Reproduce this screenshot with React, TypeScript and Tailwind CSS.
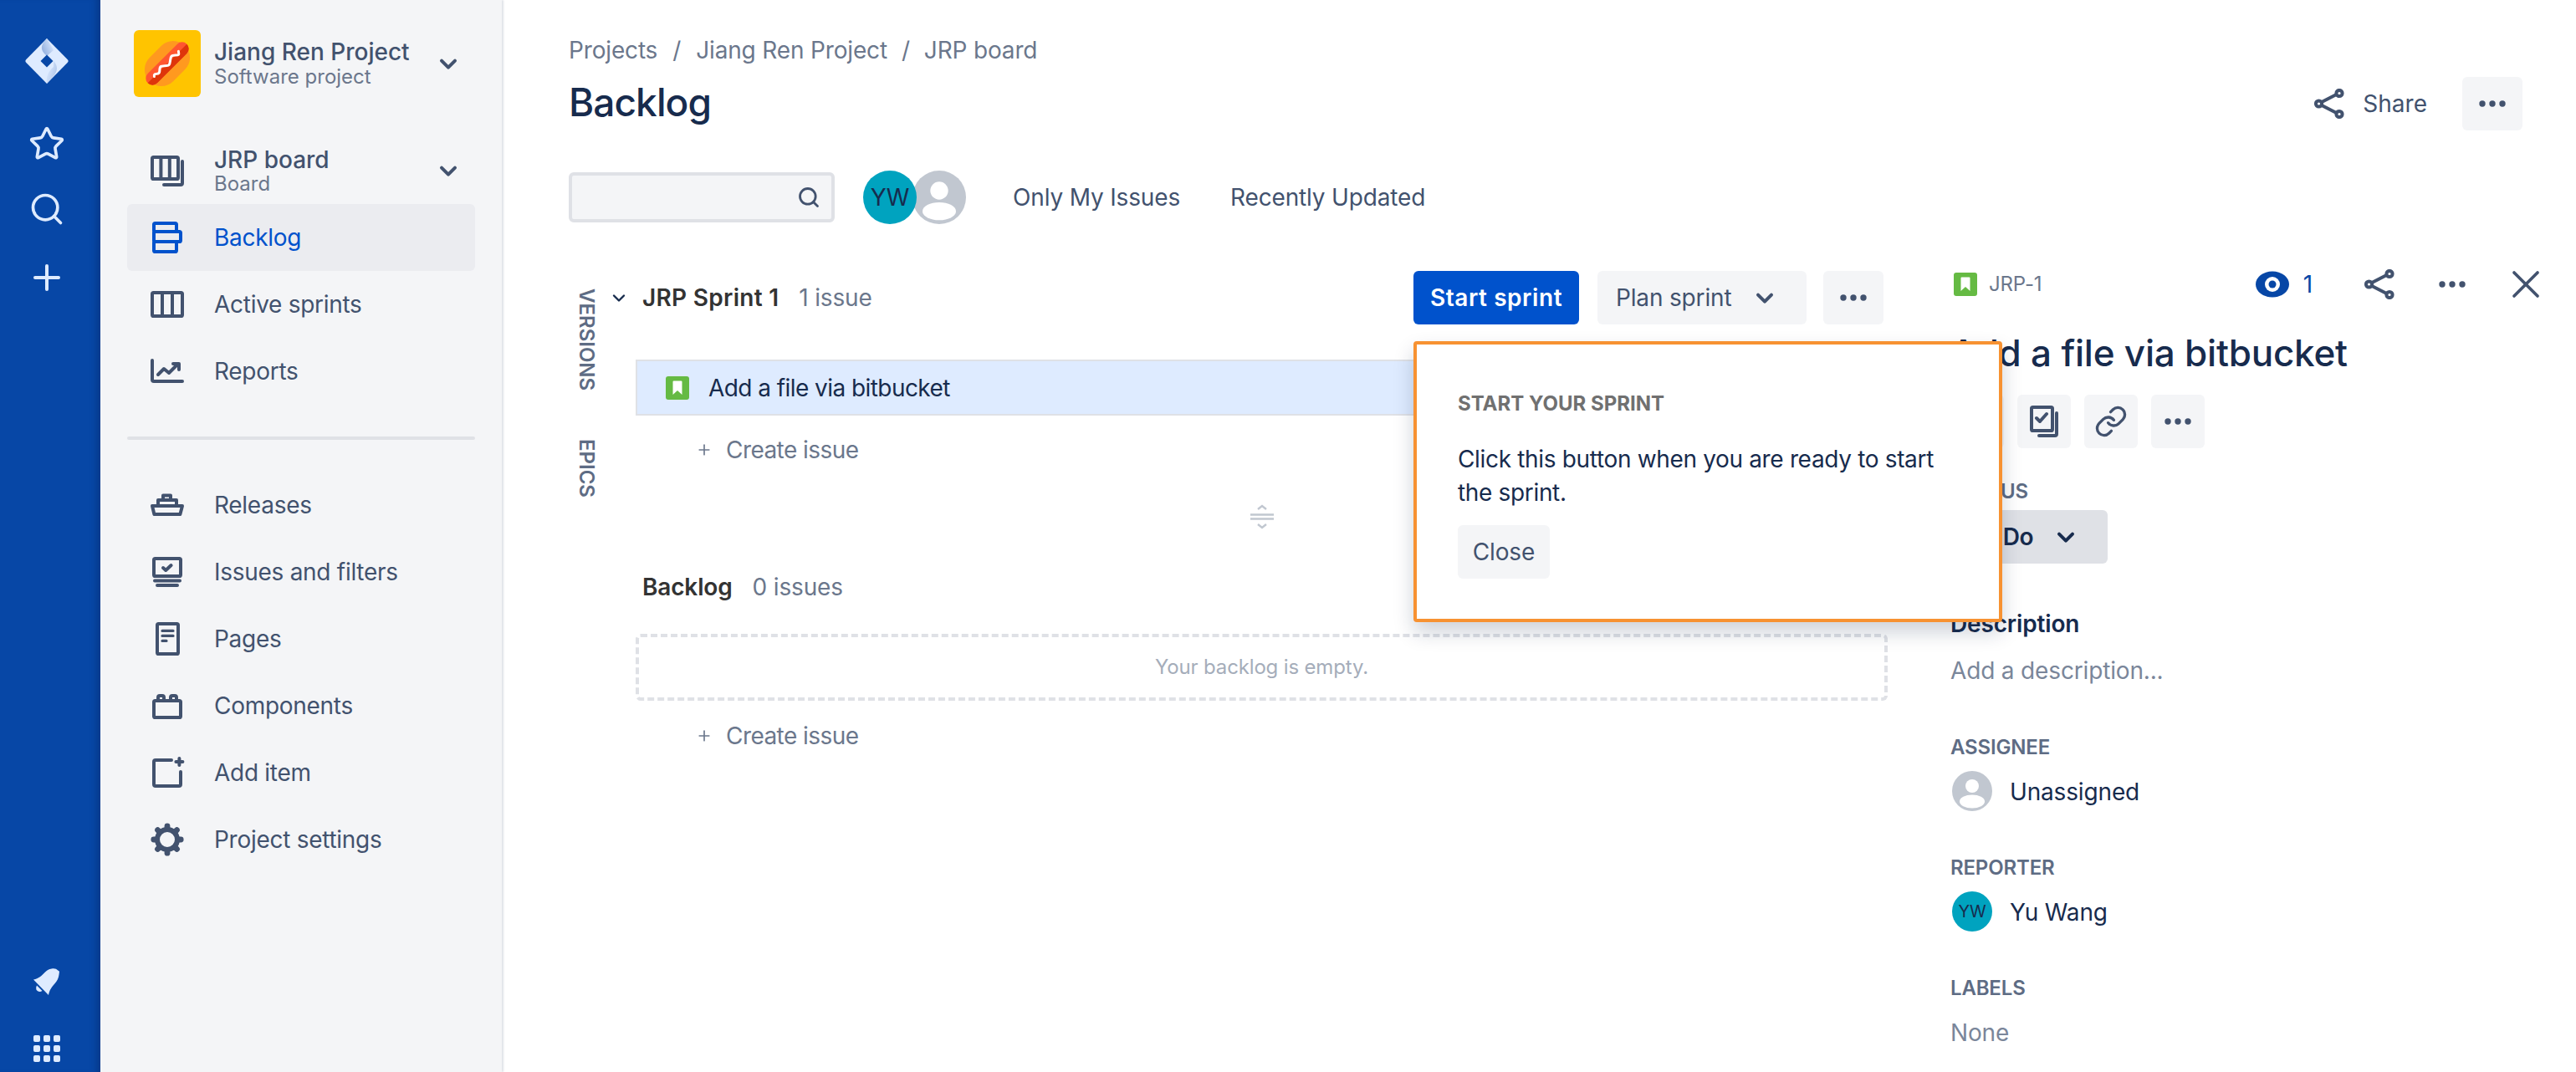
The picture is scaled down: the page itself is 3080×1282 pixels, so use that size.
import React from 'react';
import { Link, Plus, Search, Star, X } from 'lucide-react';

type IconProps = { className?: string };

function Svg({ className, children }: { className?: string; children: React.ReactNode }) {
  return (
    <svg viewBox="0 0 24 24" fill="none" stroke="currentColor" strokeWidth={2} strokeLinecap="round" strokeLinejoin="round" className={className}>
      {children}
    </svg>
  );
}

const BoardIcon = ({ className }: IconProps) => (
  <Svg className={className}>
    <rect x="3" y="4" width="15.5" height="13" rx="0.8" />
    <path d="M8.2 4v13M13.4 4v13M21 6.5v13a1 1 0 0 1-1 1H10" />
  </Svg>
);
const BacklogIcon = ({ className }: IconProps) => (
  <Svg className={className}>
    <rect x="4" y="3.5" width="13.5" height="5" rx="0.8" />
    <rect x="4" y="8.5" width="16" height="6" rx="0.8" />
    <rect x="4" y="14.5" width="13.5" height="6" rx="0.8" />
  </Svg>
);
const SprintsIcon = ({ className }: IconProps) => (
  <Svg className={className}>
    <rect x="3" y="5" width="18" height="14" rx="0.8" />
    <path d="M9 5v14M15 5v14" />
  </Svg>
);
const ReportsIcon = ({ className }: IconProps) => (
  <Svg className={className}>
    <path d="M3 5.500V17a1 1 0 0 0 1 1h17" />
    <path d="M6.500 14l3.500-3.500 3 2.500 5.500-5.500M15.500 7.500h3.500V11" />
  </Svg>
);
const ShipIcon = ({ className }: IconProps) => (
  <Svg className={className}>
    <path d="M3 12.500h18l-1.300 5H4.200z" />
    <path d="M6.500 12.500V9h11v3.500M9.500 9V6.300h4.500V9" />
  </Svg>
);
const IssuesIcon = ({ className }: IconProps) => (
  <Svg className={className}>
    <rect x="4" y="4" width="16" height="10.500" rx="0.8" />
    <path d="M9.500 9.500l1.600 1.500 3.200-3M4.500 17.200h15M6 20h12" />
  </Svg>
);
const PagesIcon = ({ className }: IconProps) => (
  <Svg className={className}>
    <rect x="6" y="3" width="12.500" height="18" rx="0.8" />
    <path d="M9 7.200h6.500M9 10.200h6.500M9 13.200h2.500" strokeWidth={1.6} />
  </Svg>
);
const ComponentsIcon = ({ className }: IconProps) => (
  <Svg className={className}>
    <rect x="4" y="9" width="16" height="10" rx="0.8" />
    <path d="M6.500 9V7a1 1 0 0 1 1-1h1.500a1 1 0 0 1 1 1v2M14 9V7a1 1 0 0 1 1-1h1.500a1 1 0 0 1 1 1v2" />
  </Svg>
);
const AddItemIcon = ({ className }: IconProps) => (
  <Svg className={className}>
    <path d="M14.500 4.500H5a1 1 0 0 0-1 1V19a1 1 0 0 0 1 1h14a1 1 0 0 0 1-1v-7.500" />
    <path d="M19.200 3.500v4M17.200 5.500h4" />
  </Svg>
);
const GearIcon = ({ className }: IconProps) => (
  <Svg className={className}>
    <circle cx="12" cy="12" r="6" strokeWidth={3} />
    {[0, 45, 90, 135, 180, 225, 270, 315].map((a) => (
      <path key={a} d="M12 3.900v1.400" strokeWidth={3.4} transform={`rotate(${a} 12 12)`} />
    ))}
  </Svg>
);

function Chevron({ className, width = 3 }: { className?: string; width?: number }) {
  return (
    <svg viewBox="0 0 24 24" fill="none" stroke="currentColor" strokeWidth={width} strokeLinecap="round" strokeLinejoin="round" className={className}>
      <path d="M6 9.500l6 6 6-6" />
    </svg>
  );
}

function Dots({ className }: IconProps) {
  return (
    <svg viewBox="0 0 32 8" fill="currentColor" className={className}>
      <circle cx="4" cy="4" r="3.700" />
      <circle cx="16" cy="4" r="3.700" />
      <circle cx="28" cy="4" r="3.700" />
    </svg>
  );
}

function ShareIcon({ className }: IconProps) {
  return (
    <svg viewBox="0 0 36 36" fill="none" stroke="currentColor" strokeWidth={4} className={className}>
      <circle cx="5.500" cy="18" r="3.600" />
      <circle cx="30" cy="5.500" r="3.600" />
      <circle cx="30" cy="30.500" r="3.600" />
      <path d="M9 16l17.500-9M9 20l17.500 9" />
    </svg>
  );
}

function StoryIcon({ className }: IconProps) {
  return (
    <svg viewBox="0 0 28 28" className={`w-7 h-7 shrink-0 ${className ?? ''}`}>
      <rect width="28" height="28" rx="3" fill="#65BA43" />
      <path d="M8.500 6.500a1 1 0 0 1 1-1h9a1 1 0 0 1 1 1V22L14 17l-5.500 5z" fill="#fff" />
    </svg>
  );
}

function DefaultAvatar({ className }: IconProps) {
  return (
    <svg viewBox="0 0 48 48" className={className}>
      <circle cx="24" cy="24" r="24" fill="#C1C7D0" />
      <circle cx="24" cy="18" r="8" fill="#fff" />
      <ellipse cx="24" cy="36.500" rx="15" ry="8" fill="#fff" />
    </svg>
  );
}

function JiraLogo() {
  return (
    <svg viewBox="0 0 52 54" className="w-[52px] h-[54px]">
      <defs>
        <linearGradient id="logoA" x1="1" y1="0.2" x2="0.2" y2="0.7">
          <stop offset="0" stopColor="#DEEBFF" />
          <stop offset="1" stopColor="#9DB8E3" />
        </linearGradient>
        <linearGradient id="logoB" x1="0" y1="0.3" x2="0.8" y2="0.8">
          <stop offset="0" stopColor="#DEEBFF" />
          <stop offset="1" stopColor="#9DB8E3" />
        </linearGradient>
      </defs>
      <path d="M26 0l24.600 24.900a3 3 0 0 1 0 4.200L26 54 1.400 29.100a3 3 0 0 1 0-4.200z" fill="#DEEBFF" />
      <path d="M26 0c-8 8-8 14-1 20l1 1 8-7z" fill="url(#logoA)" />
      <path d="M34 27c5 5 6 12-1 19l-7 8c-1-8 1-14 8-20z" fill="url(#logoB)" opacity="0.7" />
      <path d="M26 19.500l7.500 7.500-7.500 7.500-7.500-7.500z" fill="#0747A6" />
    </svg>
  );
}

function BellIcon() {
  return (
    <svg viewBox="0 0 32 32" fill="#DEEBFF" className="w-8 h-8">
      <path d="M0 13.500c6-.8 10-5 14-9 4-3.700 7-4 10-4.200l3 .4 4 3-.5 4c-.5 4-2 7-5 10.500-3.500 4-6.500 7.800-7.500 13.800z" />
      <path d="M4 20.500l6.500 6.500c-2.500 1.500-5 1-6.300-.4-1.200-1.400-1.500-3.600-.2-6.100z" />
    </svg>
  );
}

function HotDog() {
  return (
    <div className="w-20 h-20 rounded-[6px] bg-[#FFC400] shrink-0">
      <svg viewBox="0 0 80 80" className="w-20 h-20">
        <g transform="rotate(-45 40 40)">
          <rect x="10" y="20" width="60" height="40" rx="20" fill="#FF991F" />
          <rect x="7" y="32" width="66" height="16" rx="8" fill="#FF5630" />
          <path d="M7 40h66a8 8 0 0 1-8 8H15a8 8 0 0 1-8-8z" fill="#DE350B" />
          <path d="M18 40c3-5 5 4 9 0s5-4 9 0 5 3 9 0 5-4 9 0 4 1 6-1" fill="none" stroke="#FFF" strokeWidth="3" strokeLinecap="round" />
        </g>
      </svg>
    </div>
  );
}

function NavRow({ icon: Icon, label, active }: { icon: React.ComponentType<IconProps>; label: string; active?: boolean }) {
  return (
    <div className={`flex items-center gap-8 h-20 pl-6 rounded-[6px] text-[28px] tracking-[-0.01em] ${active ? 'bg-[#EBECF0] text-[#0052CC]' : 'text-[#42526E]'}`}>
      <Icon className="w-12 h-12 shrink-0" />
      <span>{label}</span>
    </div>
  );
}

function GreyButton({ className, children }: { className?: string; children?: React.ReactNode }) {
  return <div className={`flex items-center justify-center h-16 rounded-[6px] bg-[#F4F5F7] text-[#42526E] text-[28px] ${className ?? ''}`}>{children}</div>;
}

function CreateIssue({ className }: IconProps) {
  return (
    <div className={`flex items-center pl-[72px] text-[28px] tracking-[-0.02em] text-[#6B778C] ${className ?? ''}`}>
      <Plus className="w-5 h-5 mr-4" strokeWidth={2} />
      <span>Create issue</span>
    </div>
  );
}

function FieldLabel({ className, children }: { className?: string; children: React.ReactNode }) {
  return <div className={`h-[30px] leading-[30px] text-[24px] font-semibold text-[#5E6C84] ${className ?? ''}`}>{children}</div>;
}

export default function App() {
  return (
    <div className="flex w-[3080px] h-[1282px] overflow-hidden bg-white [font-family:Inter,sans-serif]">
      {/* Global rail */}
      <aside className="w-[120px] shrink-0 bg-[#0747A6] text-[#DEEBFF] flex flex-col items-center pr-2 shadow-[inset_-10px_0_8px_-6px_rgba(7,30,80,0.35)]">
        <div className="mt-[46px]"><JiraLogo /></div>
        <Star className="w-11 h-11 mt-[50px]" strokeWidth={2} />
        <Search className="w-11 h-11 mt-[34px]" strokeWidth={2} />
        <Plus className="w-12 h-12 mt-[36px]" strokeWidth={2} />
        <div className="mt-auto"><BellIcon /></div>
        <div className="grid grid-cols-3 gap-1 mt-[48px] mb-3">
          {Array.from({ length: 9 }).map((_, i) => (
            <div key={i} className="w-2 h-2 rounded-[2px] bg-[#DEEBFF]" />
          ))}
        </div>
      </aside>

      {/* Project sidebar */}
      <aside className="w-[480px] shrink-0 bg-[#F4F5F7] px-8 shadow-[2px_0_2px_rgba(9,30,66,0.13)]">
        <div className="flex items-center h-20 mt-9 ml-2">
          <HotDog />
          <div className="ml-4 flex-1">
            <div className="text-[28px] leading-[32px] font-medium text-[#42526E]">Jiang Ren Project</div>
            <div className="text-[24px] leading-[28px] text-[#6B778C]">Software project</div>
          </div>
          <Chevron className="w-8 h-8 text-[#42526E] mr-4" />
        </div>
        <div className="flex items-center h-20 mt-12 pl-6">
          <BoardIcon className="w-12 h-12 text-[#42526E] shrink-0" />
          <div className="ml-8 flex-1">
            <div className="text-[28px] leading-[32px] font-medium text-[#42526E]">JRP board</div>
            <div className="text-[24px] leading-[26px] text-[#6B778C]">Board</div>
          </div>
          <Chevron className="w-8 h-8 text-[#42526E] mr-4" />
        </div>
        <div>
          <NavRow icon={BacklogIcon} label="Backlog" active />
          <NavRow icon={SprintsIcon} label="Active sprints" />
          <NavRow icon={ReportsIcon} label="Reports" />
        </div>
        <div className="h-1 bg-[#DFE1E6] rounded-full mt-[38px] mb-[38px]" />
        <NavRow icon={ShipIcon} label="Releases" />
        <NavRow icon={IssuesIcon} label="Issues and filters" />
        <NavRow icon={PagesIcon} label="Pages" />
        <NavRow icon={ComponentsIcon} label="Components" />
        <NavRow icon={AddItemIcon} label="Add item" />
        <NavRow icon={GearIcon} label="Project settings" />
      </aside>

      {/* Main */}
      <main className="flex-1 min-w-0 pl-20 flex flex-col tracking-[-0.01em]">
        <header className="flex justify-between pt-10 mr-16">
          <div>
            <div className="flex h-10 items-center text-[28px] text-[#6B778C]">
              <span>Projects</span>
              <span className="mx-[18px]">/</span>
              <span>Jiang Ren Project</span>
              <span className="mx-[17px]">/</span>
              <span>JRP board</span>
            </div>
            <h1 className="mt-3 h-[60px] leading-[60px] text-[46px] font-medium text-[#172B4D] tracking-[-0.02em]">Backlog</h1>
          </div>
          <div className="flex items-center mt-[52px] h-16 text-[#42526E]">
            <ShareIcon className="w-9 h-9" />
            <span className="ml-[22px] mr-[42px] text-[28px] tracking-normal">Share</span>
            <GreyButton className="w-[72px]"><Dots className="w-8" /></GreyButton>
          </div>
        </header>

        <div className="flex items-center h-16 mt-12">
          <div className="w-[318px] h-[60px] rounded-[6px] border-4 border-[#DFE1E6] bg-[#F4F5F7] flex items-center justify-end pr-[13px]">
            <Search className="w-7 h-7 text-[#42526E]" strokeWidth={2.4} />
          </div>
          <div className="ml-[34px] w-16 h-16 rounded-full bg-[#00A3BF] text-[#172B4D] text-[28px] flex items-center justify-center z-10">YW</div>
          <DefaultAvatar className="w-16 h-16 -ml-[5px]" />
          <span className="ml-14 text-[28px] text-[#42526E]">Only My Issues</span>
          <span className="ml-[60px] text-[28px] text-[#42526E]">Recently Updated</span>
        </div>

        <div className="flex mt-14 relative">
          {/* Backlog list */}
          <div className="flex w-[1577px] shrink-0">
            <div className="w-20 shrink-0 pl-[9px] pt-[21px] text-[24px] leading-6 font-semibold tracking-normal text-[#5E6C84]">
              <div className="[writing-mode:vertical-rl]">VERSIONS</div>
              <div className="[writing-mode:vertical-rl] mt-[58px]">EPICS</div>
            </div>
            <div className="flex-1 min-w-0">
              <div className="flex items-center h-16 pl-2 pr-[5px]">
                <Chevron className="w-6 h-6 text-[#172B4D] -ml-10 mr-4" width={2.4} />
                <span className="text-[28px] font-semibold tracking-[0.01em] text-[#333333]">JRP Sprint 1</span>
                <span className="ml-6 text-[28px] text-[#6B778C]">1 issue</span>
                <div className="ml-auto flex gap-[22px]">
                  <div className="flex items-center justify-center w-[198px] h-16 rounded-[6px] bg-[#0052CC] text-white text-[28px] font-semibold tracking-[0.02em]">Start sprint</div>
                  <GreyButton className="w-[250px] !justify-start pl-[22px]">
                    <span>Plan sprint</span>
                    <Chevron className="w-8 h-8 ml-6" />
                  </GreyButton>
                  <GreyButton className="w-[72px] -ml-0.5"><Dots className="w-8" /></GreyButton>
                </div>
              </div>
              <div className="mt-[42px] h-[67px] bg-[#DEEBFF] border-y-2 border-l-2 border-[#DFE1E6] flex items-center pl-[34px] text-[28px] tracking-[-0.02em] text-[#172B4D]">
                <StoryIcon />
                <span className="ml-[23px]">Add a file via bitbucket</span>
              </div>
              <CreateIssue className="h-[82px]" />
              <div className="h-[78px] flex items-center justify-center text-[#C1C7D0]">
                <svg viewBox="0 0 32 32" fill="none" stroke="currentColor" strokeWidth={2.4} className="w-8 h-8">
                  <path d="M11 7l5-4 5 4" />
                  <path d="M2 13.500h28M2 18.500h28" />
                  <path d="M11 25l5 4 5-4" />
                </svg>
              </div>
              <div className="flex items-center h-[90px] pl-2">
                <span className="text-[28px] font-semibold text-[#333333]">Backlog</span>
                <span className="ml-6 text-[28px] text-[#6B778C]">0 issues</span>
              </div>
              <div className="mt-[11px] h-20 border-4 border-dashed border-[#DFE1E6] rounded-[6px] flex items-center justify-center text-[24px] text-[#A5ADBA]">Your backlog is empty.</div>
              <CreateIssue className="h-[84px]" />
            </div>
          </div>

          {/* Issue detail */}
          <div className="ml-[75px] flex-1 min-w-0 pr-8">
            <div className="flex items-center h-8">
              <StoryIcon className="ml-1" />
              <span className="ml-[14px] text-[24px] text-[#6B778C]">JRP-1</span>
              <svg viewBox="0 0 40 32" className="w-10 h-8 ml-auto">
                <ellipse cx="20" cy="16" rx="20" ry="15.500" fill="#0747A6" />
                <circle cx="20" cy="16" r="9" fill="#fff" />
                <circle cx="20" cy="16" r="4.500" fill="#0747A6" />
              </svg>
              <span className="ml-[17px] text-[28px] text-[#0747A6]">1</span>
              <ShareIcon className="w-9 h-9 ml-[62px] text-[#42526E]" />
              <Dots className="w-8 ml-[53px] text-[#42526E]" />
              <X className="w-14 h-14 -my-3 ml-[44px] text-[#42526E]" strokeWidth={1.6} />
            </div>
            <h2 className="mt-9 h-[60px] leading-[60px] text-[44px] font-medium text-[#172B4D] whitespace-nowrap tracking-[-0.005em]">Add a file via bitbucket</h2>
            <div className="flex gap-4 mt-5">
              <GreyButton className="w-16" />
              <GreyButton className="w-16">
                <Svg className="w-12 h-12">
                  <rect x="4.500" y="3.500" width="12.500" height="14" rx="0.8" />
                  <path d="M7.500 10l2 2 4-4.500M19.500 7v12.500a1 1 0 0 1-1 1H9" />
                </Svg>
              </GreyButton>
              <GreyButton className="w-16"><Link className="w-10 h-10" strokeWidth={2} /></GreyButton>
              <GreyButton className="w-16"><Dots className="w-8" /></GreyButton>
            </div>
            <FieldLabel className="mt-[37px]">STATUS</FieldLabel>
            <div className="mt-[7px] w-[188px] h-16 rounded-[6px] bg-[#DFE1E6] flex items-center pl-6 text-[28px] font-semibold tracking-[-0.02em] text-[#172B4D]">
              <span>To Do</span>
              <Chevron className="w-8 h-8 ml-[23px]" />
            </div>
            <div className="mt-[52px] h-10 leading-10 text-[28px] font-semibold text-[#172B4D]">Description</div>
            <div className="mt-4 h-10 leading-10 text-[28px] text-[#7A869A]">Add a description...</div>
            <FieldLabel className="mt-[57px]">ASSIGNEE</FieldLabel>
            <div className="flex items-center h-12 mt-[13px] pl-0.5">
              <DefaultAvatar className="w-12 h-12" />
              <span className="ml-[21px] mt-0.5 text-[28px] text-[#172B4D]">Unassigned</span>
            </div>
            <FieldLabel className="mt-[53px]">REPORTER</FieldLabel>
            <div className="flex items-center h-12 mt-[13px] pl-0.5">
              <div className="w-12 h-12 rounded-full bg-[#00A3BF] text-[#172B4D] text-[20px] flex items-center justify-center">YW</div>
              <span className="ml-[21px] mt-0.5 text-[28px] text-[#172B4D]">Yu Wang</span>
            </div>
            <FieldLabel className="mt-[53px]">LABELS</FieldLabel>
            <div className="mt-[18px] h-10 leading-10 text-[28px] text-[#7A869A]">None</div>
          </div>

          {/* Onboarding popup */}
          <div className="absolute left-[1010px] top-[84px] w-[704px] h-[336px] bg-white border-4 border-[#F79232] rounded-[4px] shadow-[0_12px_24px_rgba(9,30,66,0.2)] pl-[49px] pt-[54px] z-20">
            <div className="h-[34px] leading-[34px] text-[24px] font-bold tracking-normal text-[#707070]">START YOUR SPRINT</div>
            <p className="mt-[29px] text-[28px] leading-10 tracking-[-0.012em] text-[#172B4D]">Click this button when you are ready to start<br />the sprint.</p>
            <GreyButton className="w-[110px] mt-[19px]">Close</GreyButton>
          </div>
        </div>
      </main>
    </div>
  );
}
